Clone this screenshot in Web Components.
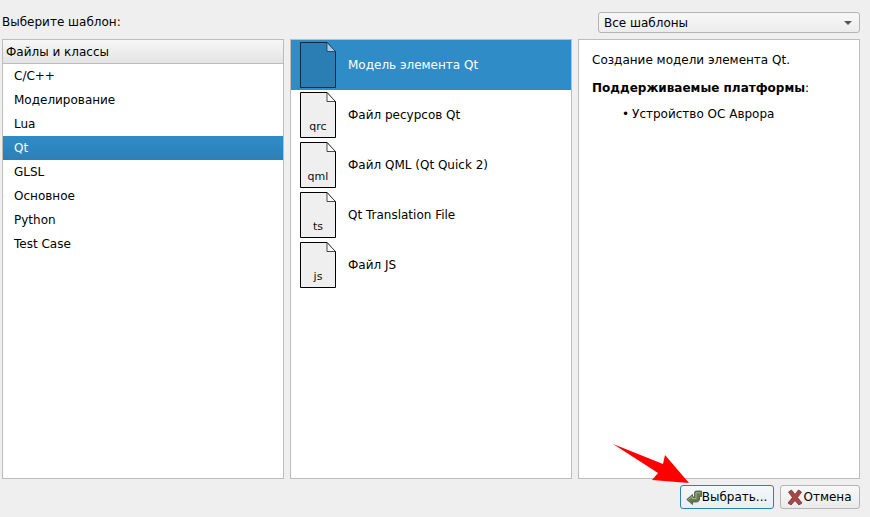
<!DOCTYPE html>
<html lang="ru">
<head>
<meta charset="utf-8">
<title>Выберите шаблон</title>
<style>
  html, body { margin: 0; height: 100%; background: #efefef; }
  body { font: 12px "DejaVu Sans", sans-serif; color: #000; overflow: hidden; }
</style>
</head>
<body>
<wizard-page>
  <span slot="label">Выберите шаблон:</span>
  <template-combo slot="combo">Все шаблоны</template-combo>
  <category-list slot="categories" title-text="Файлы и классы" selected="Qt"
    items="C/C++|Моделирование|Lua|Qt|GLSL|Основное|Python|Test Case"></category-list>
  <div slot="files">
    <file-item name="Модель элемента Qt" selected></file-item>
    <file-item name="Файл ресурсов Qt" ext="qrc"></file-item>
    <file-item name="Файл QML (Qt Quick 2)" ext="qml"></file-item>
    <file-item name="Qt Translation File" ext="ts"></file-item>
    <file-item name="Файл JS" ext="js"></file-item>
  </div>
  <template-info slot="info" platform="Устройство ОС Аврора">Создание модели элемента Qt.</template-info>
  <dialog-button slot="buttons" icon="choose" focused style="width:94px">Выбрать...</dialog-button>
  <dialog-button slot="buttons" icon="cancel" style="width:80px">Отмена</dialog-button>
</wizard-page>
<red-arrow></red-arrow>

<script>
class WizardPage extends HTMLElement {
  constructor() {
    super();
    this.attachShadow({ mode: "open" }).innerHTML = `
      <style>
        :host { display: flex; flex-direction: column; height: 517px; box-sizing: border-box; padding: 12px 10px 7px 2px; }
        .top { display: flex; justify-content: space-between; align-items: center; height: 21px; margin-bottom: 6px; }
        .top ::slotted([slot=label]) { margin-bottom: 2px; }
        .panels { display: grid; grid-template-columns: 282px 282px 282px; column-gap: 6px; height: 440px; }
        .panel { box-sizing: border-box; border: 1px solid #bcbcbc; background: #fff; overflow: hidden; min-width: 0; }
        .bottom { display: flex; justify-content: flex-end; gap: 6px; margin-top: 6px; }
        .bottom ::slotted(*) { flex: none; }
      </style>
      <div class="top"><slot name="label"></slot><slot name="combo"></slot></div>
      <div class="panels">
        <div class="panel"><slot name="categories"></slot></div>
        <div class="panel"><slot name="files"></slot></div>
        <div class="panel"><slot name="info"></slot></div>
      </div>
      <div class="bottom"><slot name="buttons"></slot></div>`;
  }
}

class TemplateCombo extends HTMLElement {
  constructor() {
    super();
    this.attachShadow({ mode: "open" }).innerHTML = `
      <style>
        :host { display: flex; align-items: center; justify-content: space-between; box-sizing: border-box; width: 262px; height: 21px;
          padding: 0 6px 0 5px; border: 1px solid #b4b4b4; border-radius: 3px; background: linear-gradient(#f8f8f8, #ececec); }
        i { width: 0; height: 0; border: 4px solid transparent; border-top: 4px solid #555; border-bottom: 0; margin-right: 1px; }
      </style>
      <slot></slot><i></i>`;
  }
}

class CategoryList extends HTMLElement {
  connectedCallback() {
    const selected = this.getAttribute("selected");
    const rows = this.getAttribute("items").split("|").map(t =>
      `<div class="row${t === selected ? " sel" : ""}">${t}</div>`).join("");
    this.attachShadow({ mode: "open" }).innerHTML = `
      <style>
        :host { display: block; }
        .head { box-sizing: border-box; height: 24px; line-height: 25px; padding-left: 3px; border-bottom: 1px solid #bcbcbc;
          background: linear-gradient(#f7f7f7, #e4e4e4); }
        .row { height: 24px; line-height: 24px; padding-left: 11px; }
        .sel { background: linear-gradient(#308cc6, #2b80b6); color: #fff; }
      </style>
      <div class="head">${this.getAttribute("title-text")}</div>${rows}`;
  }
}

class FileItem extends HTMLElement {
  connectedCallback() {
    const sel = this.hasAttribute("selected");
    const fill = sel ? "#2b7eb3" : "#efefef";
    const line = sel ? "#0c2a3c" : "#000";
    const fold = sel ? "#a8cbe2" : "#fff";
    this.attachShadow({ mode: "open" }).innerHTML = `
      <style>
        :host { display: flex; align-items: center; height: 50px; padding-left: 9px; }
        :host([selected]) { background: #308cc6; color: #fff; }
        .page { position: relative; flex: none; width: 36px; height: 46px; margin-right: 12px; }
        svg { display: block; }
        .ext { position: absolute; left: 0; right: 0; bottom: 5px; text-align: center; color: #111; font-size: 11px; }
      </style>
      <div class="page">
        <svg width="36" height="46" viewBox="0 0 36 46">
          <path d="M.5.500H27L35.500 10V45.500H.5Z" fill="${fill}" stroke="${line}"/>
          <path d="M27 .5V9.500H35.500Z" fill="${fold}" stroke="${line}" stroke-width=".7"/>
        </svg>
        <span class="ext">${this.getAttribute("ext") || ""}</span>
      </div>
      <span>${this.getAttribute("name")}</span>`;
  }
}

class TemplateInfo extends HTMLElement {
  connectedCallback() {
    this.attachShadow({ mode: "open" }).innerHTML = `
      <style>
        :host { display: block; padding: 13px 13px 0; }
        p { margin: 0 0 14px; line-height: 14px; }
        p + p { margin-bottom: 12px; }
        ul { margin: 0; padding: 0 0 0 30px; list-style: none; line-height: 14px; }
        li::before { content: "•"; margin-right: 3px; }
      </style>
      <p><slot></slot></p>
      <p><b>Поддерживаемые платформы</b>:</p>
      <ul><li>${this.getAttribute("platform")}</li></ul>`;
  }
}

class DialogButton extends HTMLElement {
  connectedCallback() {
    const icons = {
      choose: `<path d="M.8 10.500 6.500 5.500V8H8.500V3.500C8.500 2.500 9.500 2 10.500 2H15.500V7.500H13.500V10C13.500 12 12 13 10.500 13H6.500V15.500Z" fill="#66794f" stroke="#46543a" stroke-width=".8"/><path d="M2.500 10.500 6 7.500V9.500H10V3.800H14.500" fill="none" stroke="#a5b58e"/>`,
      cancel: `<path d="M1.500 3 4.500 1 8 5.500 11.500 1 14.500 3 10.500 8.500 15 14 12 16 8 11.500 4 16 1 14 5.500 8.500Z" fill="#a84746" stroke="#6d3033" stroke-width=".8"/>`
    };
    this.attachShadow({ mode: "open" }).innerHTML = `
      <style>
        :host { display: inline-flex; align-items: center; justify-content: center; box-sizing: border-box; height: 24px; padding-right: 1px;
          border: 1px solid #b4b4b4; border-radius: 3px; background: linear-gradient(#f8f8f8, #ebebeb); }
        :host([focused]) { border-color: #2f7fb0; background: linear-gradient(#f4f8fb, #e8eef2); }
        svg { flex: none; }
      </style>
      <svg width="16" height="16" viewBox="0 0 16 16">${icons[this.getAttribute("icon")]}</svg>
      <slot></slot>`;
  }
}

// annotation drawn over the screenshot, not part of the dialog
class RedArrow extends HTMLElement {
  constructor() {
    super();
    this.attachShadow({ mode: "open" }).innerHTML = `
      <style>:host { position: absolute; left: 610px; top: 442px; width: 82px; height: 44px; pointer-events: none; }</style>
      <svg width="82" height="44" viewBox="610 442 82 44"><path d="M613 444 663 464 665 455 689 483 652 480 658 473Z" fill="#fe0000"/></svg>`;
  }
}

customElements.define("wizard-page", WizardPage);
customElements.define("template-combo", TemplateCombo);
customElements.define("category-list", CategoryList);
customElements.define("file-item", FileItem);
customElements.define("template-info", TemplateInfo);
customElements.define("dialog-button", DialogButton);
customElements.define("red-arrow", RedArrow);
</script>
</body>
</html>
